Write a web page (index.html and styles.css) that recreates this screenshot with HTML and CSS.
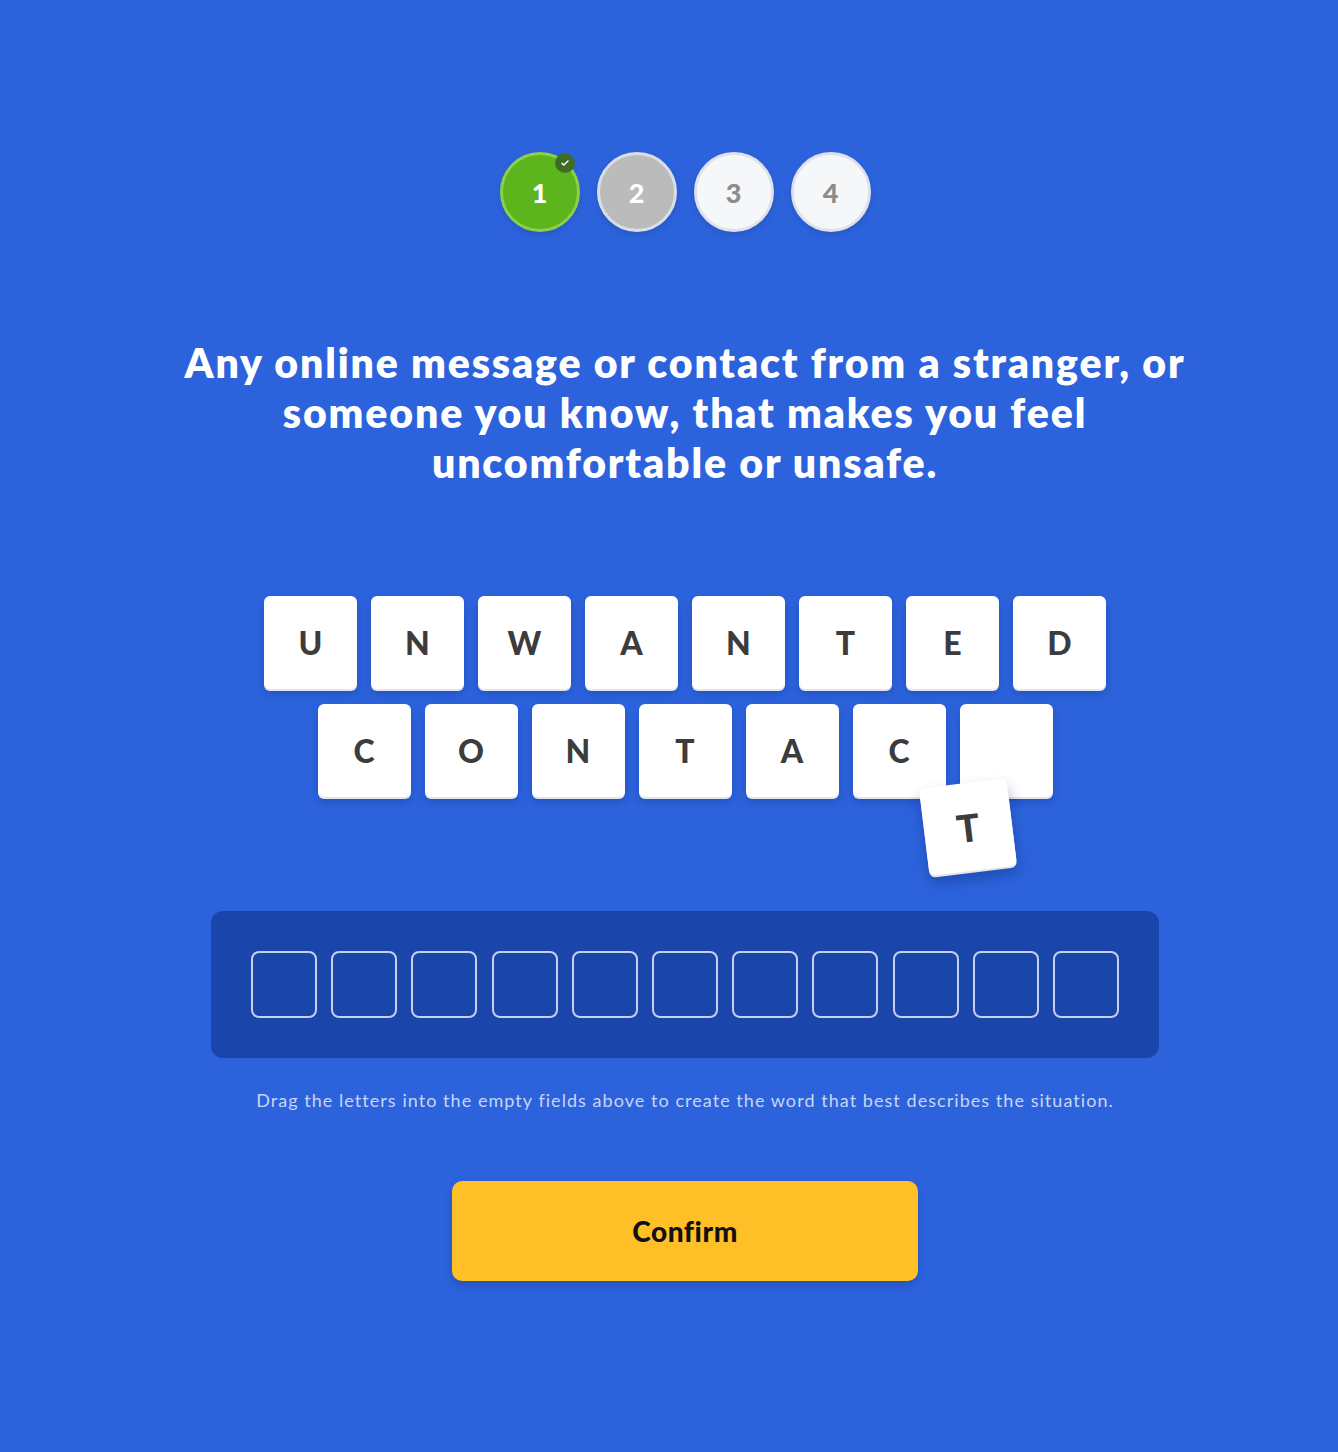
FILE: index.html
```html
<!DOCTYPE html>
<html lang="en">
<head>
<meta charset="utf-8">
<title>Unwanted contact</title>
<link rel="stylesheet" href="styles.css">
</head>
<body>
<main class="page">
  <ol class="steps">
    <li class="step step-done">1
      <span class="step-check"><svg viewBox="0 0 20 20" width="12" height="12"><path d="M5 10.5l3.2 3L15 6.5" fill="none" stroke="#fff" stroke-width="2.4" stroke-linecap="round" stroke-linejoin="round"/></svg></span>
    </li>
    <li class="step step-current">2</li>
    <li class="step">3</li>
    <li class="step">4</li>
  </ol>

  <h1 class="question">Any online message or contact from a stranger, or<br>someone you know, that makes you feel<br>uncomfortable or unsafe.</h1>

  <div class="letters">
    <div class="letter-row">
      <span class="tile">U</span><span class="tile">N</span><span class="tile">W</span><span class="tile">A</span><span class="tile">N</span><span class="tile">T</span><span class="tile">E</span><span class="tile">D</span>
    </div>
    <div class="letter-row">
      <span class="tile">C</span><span class="tile">O</span><span class="tile">N</span><span class="tile">T</span><span class="tile">A</span><span class="tile">C</span><span class="tile"></span>
    </div>
    <span class="tile tile-drag">T</span>
  </div>

  <div class="dropzone">
    <span class="slot"></span><span class="slot"></span><span class="slot"></span><span class="slot"></span><span class="slot"></span><span class="slot"></span><span class="slot"></span><span class="slot"></span><span class="slot"></span><span class="slot"></span><span class="slot"></span>
  </div>

  <p class="hint">Drag the letters into the empty fields above to create the word that best describes the situation.</p>

  <button class="confirm" type="button">Confirm</button>
</main>
</body>
</html>
```

FILE: styles.css
```css
html, body {
  margin: 0;
  padding: 0;
}
body {
  background: #2c63dd;
  font-family: "Lato", "Noto Sans", sans-serif;
  width: 1338px;
  min-height: 1452px;
}
.page {
  box-sizing: border-box;
  padding: 152px 0 0 32px;
  display: flex;
  flex-direction: column;
  align-items: center;
}
.steps {
  list-style: none;
  margin: 0;
  padding: 0;
  display: flex;
  gap: 17px;
}
.step {
  position: relative;
  box-sizing: border-box;
  width: 80px;
  height: 80px;
  border-radius: 50%;
  background: #f6f7f9;
  border: 3px solid #dfe2ea;
  color: #8c8c8c;
  font-weight: 900;
  font-size: 27px;
  display: flex;
  align-items: center;
  justify-content: center;
  box-shadow: 0 3px 6px rgba(0, 0, 0, 0.12);
}
.step-done {
  background: #5db51e;
  border-color: #8ccf4a;
  color: #fff;
}
.step-current {
  background: #bbbbbb;
  border-color: #dcdee6;
  color: #fff;
}
.step-check {
  position: absolute;
  top: -2px;
  right: 2px;
  width: 20px;
  height: 20px;
  border-radius: 50%;
  background: #3e6b26;
  display: flex;
  align-items: center;
  justify-content: center;
}
.question {
  margin: 106px 0 0;
  color: #fff;
  font-weight: 800;
  font-size: 41px;
  line-height: 50px;
  text-align: center;
  letter-spacing: 1.85px;
}
.letters {
  position: relative;
  margin-top: 108px;
  display: flex;
  flex-direction: column;
  align-items: center;
  gap: 15px;
}
.letter-row {
  display: flex;
  gap: 14px;
}
.tile {
  box-sizing: border-box;
  width: 93px;
  height: 93px;
  border-radius: 6px;
  background: #fff;
  color: #3c3c3c;
  font-weight: 900;
  font-size: 32px;
  display: flex;
  align-items: center;
  justify-content: center;
  box-shadow: 0 2px 0 #e2e5ec, 0 5px 10px rgba(0, 20, 80, 0.22);
}
.tile-drag {
  position: absolute;
  left: 660px;
  top: 187px;
  width: 88px;
  height: 88px;
  font-size: 38px;
  transform: rotate(-7deg);
  box-shadow: 0 2px 0 #e2e5ec, 0 8px 14px rgba(0, 20, 80, 0.3);
}
.dropzone {
  box-sizing: border-box;
  margin-top: 114px;
  width: 948px;
  height: 147px;
  padding: 40px;
  border-radius: 12px;
  background: #1a45ab;
  display: flex;
  justify-content: space-between;
}
.slot {
  box-sizing: border-box;
  width: 66px;
  height: 67px;
  border: 2px solid #c5d0ee;
  border-radius: 8px;
}
.hint {
  margin: 31px 0 0;
  color: #c8d5f5;
  font-size: 18px;
  line-height: 22px;
  letter-spacing: 1.05px;
}
.confirm {
  margin-top: 70px;
  width: 466px;
  height: 100px;
  border: none;
  border-radius: 10px;
  background: #ffbf26;
  color: #111;
  font-family: "Lato", "Noto Sans", sans-serif;
  font-weight: 900;
  font-size: 28px;
  letter-spacing: 0.6px;
  box-shadow: 0 4px 8px rgba(0, 0, 0, 0.18);
}
```
